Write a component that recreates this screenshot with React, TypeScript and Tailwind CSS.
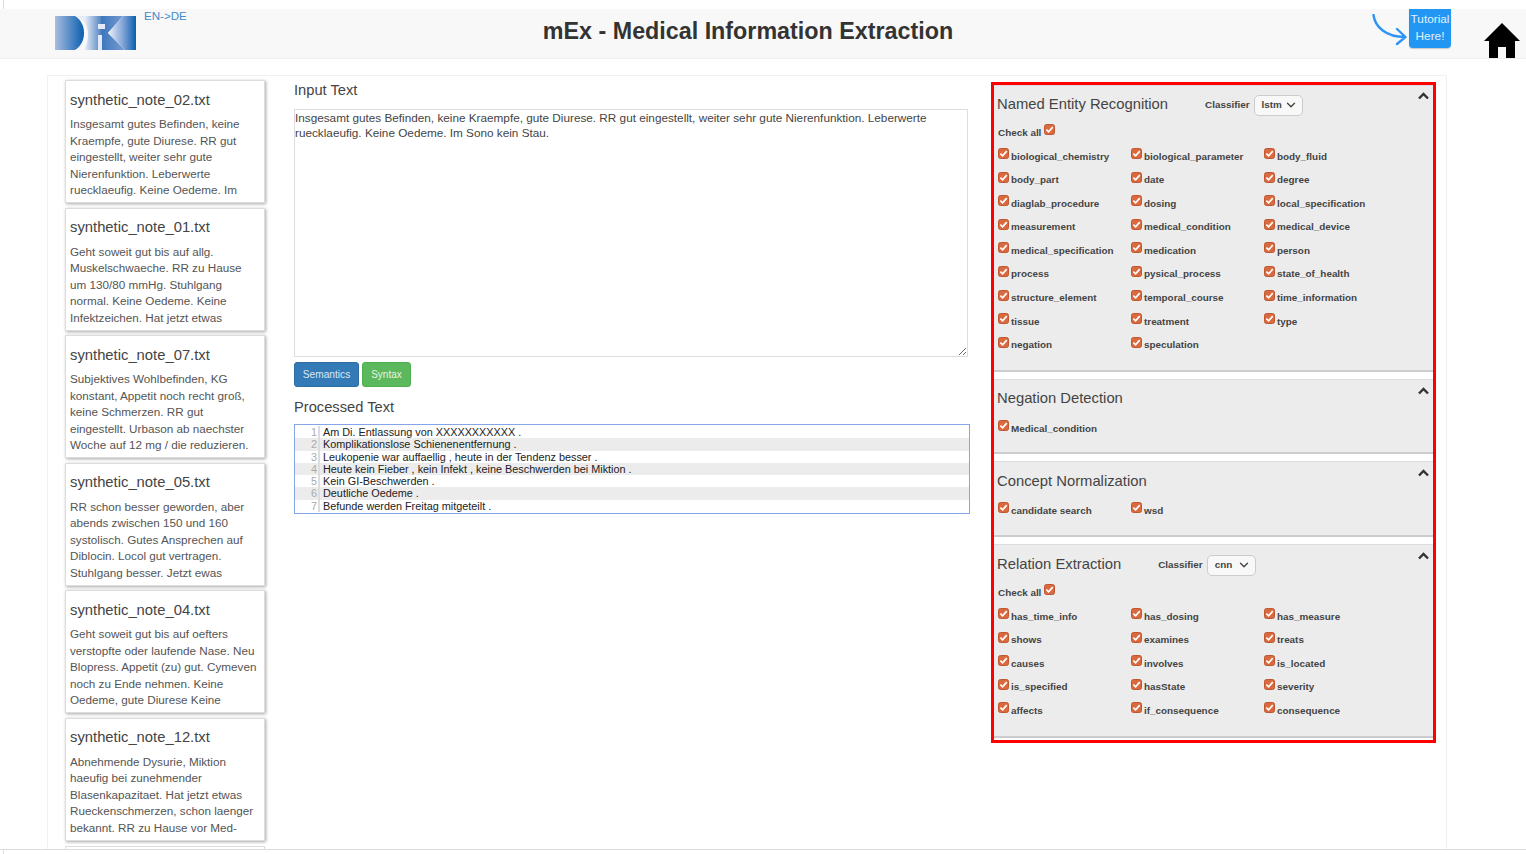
import { ChevronDown } from "lucide-react";

const NOTES = [
  { name: "synthetic_note_02.txt", lines: ["Insgesamt gutes Befinden, keine", "Kraempfe, gute Diurese. RR gut", "eingestellt, weiter sehr gute", "Nierenfunktion. Leberwerte", "ruecklaeufig. Keine Oedeme. Im"] },
  { name: "synthetic_note_01.txt", lines: ["Geht soweit gut bis auf allg.", "Muskelschwaeche. RR zu Hause", "um 130/80 mmHg. Stuhlgang", "normal. Keine Oedeme. Keine", "Infektzeichen. Hat jetzt etwas"] },
  { name: "synthetic_note_07.txt", lines: ["Subjektives Wohlbefinden, KG", "konstant, Appetit noch recht groß,", "keine Schmerzen. RR gut", "eingestellt. Urbason ab naechster", "Woche auf 12 mg / die reduzieren."] },
  { name: "synthetic_note_05.txt", lines: ["RR schon besser geworden, aber", "abends zwischen 150 und 160", "systolisch. Gutes Ansprechen auf", "Diblocin. Locol gut vertragen.", "Stuhlgang besser. Jetzt ewas"] },
  { name: "synthetic_note_04.txt", lines: ["Geht soweit gut bis auf oefters", "verstopfte oder laufende Nase. Neu", "Blopress. Appetit (zu) gut. Cymeven", "noch zu Ende nehmen. Keine", "Oedeme, gute Diurese Keine"] },
  { name: "synthetic_note_12.txt", lines: ["Abnehmende Dysurie, Miktion", "haeufig bei zunehmender", "Blasenkapazitaet. Hat jetzt etwas", "Rueckenschmerzen, schon laenger", "bekannt. RR zu Hause vor Med-"] },
];

const PROCESSED = [
  "Am Di. Entlassung von XXXXXXXXXXX .",
  "Komplikationslose Schienenentfernung .",
  "Leukopenie war auffaellig , heute in der Tendenz besser .",
  "Heute kein Fieber , kein Infekt , keine Beschwerden bei Miktion .",
  "Kein GI-Beschwerden .",
  "Deutliche Oedeme .",
  "Befunde werden Freitag mitgeteilt .",
];

const NER = [
  "biological_chemistry", "biological_parameter", "body_fluid",
  "body_part", "date", "degree",
  "diaglab_procedure", "dosing", "local_specification",
  "measurement", "medical_condition", "medical_device",
  "medical_specification", "medication", "person",
  "process", "pysical_process", "state_of_health",
  "structure_element", "temporal_course", "time_information",
  "tissue", "treatment", "type",
  "negation", "speculation",
];

const RELATIONS = [
  "has_time_info", "has_dosing", "has_measure",
  "shows", "examines", "treats",
  "causes", "involves", "is_located",
  "is_specified", "hasState", "severity",
  "affects", "if_consequence", "consequence",
];

function Check() {
  return (
    <span className="flex h-[11px] w-[11px] shrink-0 items-center justify-center rounded-[2.5px] border border-[#c2572f] bg-[#d9693f]">
      <svg width="9" height="9" viewBox="0 0 10 10" fill="none">
        <path d="M1.5 5.2 L4 7.6 L8.6 2.4" stroke="#fff" strokeWidth="1.9" />
      </svg>
    </span>
  );
}

function CheckItem({ label }: { label: string }) {
  return (
    <div className="flex h-[23.6px] w-[133px] items-start">
      <Check />
      <span className="ml-[2px] mt-[1.5px] whitespace-nowrap text-[9.9px] font-bold leading-[14px] text-[#444]">{label}</span>
    </div>
  );
}

function CheckAll() {
  return (
    <div className="mb-[9px] flex h-[15px] items-start">
      <span className="mt-[2px] text-[9.9px] font-bold leading-[14px] text-[#444]">Check all</span>
      <span className="ml-[3px]"><Check /></span>
    </div>
  );
}

function Classifier({ value }: { value: string }) {
  return (
    <div className="mt-[2px] flex items-center">
      <span className="text-[9.9px] font-bold text-[#444]">Classifier</span>
      <div className="ml-[4px] flex h-[21px] w-[49px] items-center justify-between rounded-[5px] border border-[#ccc] bg-[#f8f8f8] pl-[7px] pr-[4px] text-[9.9px] font-bold text-[#444]">
        {value}
        <ChevronDown size={14} strokeWidth={2.4} />
      </div>
    </div>
  );
}

function Panel({ title, classifier, head, caret, height, children }: { title: string; classifier?: string; head: string; caret: string; height: string; children: React.ReactNode }) {
  return (
    <div className={`relative border-b-2 border-t border-b-[#ccc] border-t-[#ddd] bg-[#ececec] pl-[4px] pr-[4px] ${height}`}>
      <div className={`-ml-[1px] flex items-center ${head}`}>
        <h3 className="text-[14.8px] font-normal leading-[24px] text-[#444]">{title}</h3>
        {classifier && <Classifier value={classifier} />}
      </div>
      <svg className={`absolute right-[4px] ${caret}`} width="11" height="8" viewBox="0 0 11 8" fill="none">
        <path d="M1 6.5 L5.5 2 L10 6.5" stroke="#333" strokeWidth="2.4" />
      </svg>
      {children}
    </div>
  );
}

export default function App() {
  return (
    <div className="relative h-screen overflow-hidden bg-white font-['Liberation_Sans',sans-serif] text-[#333]">
      <div className="flex h-[9px] pl-[3px]">
        <div className="w-px bg-[#ddd]" />
      </div>

      {/* Navbar */}
      <nav className="relative flex h-[50px] items-center justify-center border-b border-[#eee] bg-[#f8f8f8] pr-[30px]">
        <svg className="absolute left-[55px] top-[7px]" width="81" height="34" viewBox="0 0 81 34">
          <defs>
            <linearGradient id="dg" x1="0" x2="1" y1="0" y2="0">
              <stop offset="0" stopColor="#a9bde2" />
              <stop offset="1" stopColor="#0a5eae" />
            </linearGradient>
            <linearGradient id="fg" gradientUnits="userSpaceOnUse" x1="30" x2="50" y1="0" y2="0">
              <stop offset="0" stopColor="#e6ecf7" />
              <stop offset="1" stopColor="#2f6cb6" />
            </linearGradient>
            <linearGradient id="kw" gradientUnits="userSpaceOnUse" x1="47" x2="72" y1="0" y2="0">
              <stop offset="0" stopColor="#3f78bd" />
              <stop offset="1" stopColor="#7fa0d4" />
            </linearGradient>
            <linearGradient id="kg" gradientUnits="userSpaceOnUse" x1="53" x2="81" y1="0" y2="0">
              <stop offset="0" stopColor="#eef2fa" />
              <stop offset="0.55" stopColor="#7ea2d5" />
              <stop offset="1" stopColor="#0a5eae" />
            </linearGradient>
          </defs>
          <path d="M0 0 H20 C26 4 29 10 29 17 C29 24 26 30 20 34 H0 Z" fill="url(#dg)" />
          <path d="M22 0 H48 V34 H29 C32 29 33 23 33 17 C33 10 28 3 22 0 Z" fill="url(#fg)" />
          <path d="M46 0 H68 L53 17 L70 34 H46 Z" fill="url(#kw)" />
          <path d="M43 8 H50 V13 H43 Z M43 19 H47 V34 H43 Z" fill="#e3e9f6" />
          <path d="M53 17 L68 0 H81 V34 H70 Z" fill="url(#kg)" />
        </svg>
        <a className="absolute left-[144px] top-0 text-[11.6px] leading-[14px] text-[#428bca]">EN-&gt;DE</a>
        <h1 className="mb-[5px] text-[23.3px] font-bold leading-[26px] text-[#333]">mEx - Medical Information Extraction</h1>
        <svg className="absolute left-[1372px] top-[5px]" width="36" height="32" viewBox="0 0 36 32" fill="none">
          <path d="M1.5 1 C3 13 14 23 33 23 M25 15 L33.5 23 L25 30" stroke="#2f95f5" strokeWidth="2.4" strokeLinecap="round" strokeLinejoin="round" />
        </svg>
        <div className="absolute left-[1409px] top-0 flex h-[39px] w-[42px] items-center justify-center rounded-b-[4px] bg-[#2196f3] pb-[2px] text-center text-[11.8px] leading-[16.5px] text-[#e3f1fd] shadow-[0_1px_1px_rgba(0,0,0,0.2)]">
          Tutorial<br />Here!
        </div>
        <svg className="absolute left-[1484px] top-[14px]" width="36" height="35" viewBox="0 0 36 35">
          <path d="M18 0 L36 18 H31 V35 H22 V24 H14 V35 H5 V18 H0 Z" fill="#000" />
        </svg>
      </nav>

      {/* Main content */}
      <div className="ml-[47px] mt-[16px] flex h-[800px] w-[1400px] border-x border-t border-[#f0f0f0]">
        <div className="ml-[17px] mt-[4px] w-[200px] shrink-0">
          {NOTES.map((n) => (
            <div key={n.name} className="mb-[4.6px] h-[123px] border border-[#ddd] bg-white pl-[4px] pt-[8.5px] shadow-[1px_1px_3px_rgba(0,0,0,0.35)]">
              <h4 className="mb-[6.5px] text-[14.8px] font-normal leading-[20px] text-[#444]">{n.name}</h4>
              <p className="whitespace-nowrap text-[11.7px] leading-[16.5px] text-[#555]">
                {n.lines.map((l) => <span key={l} className="block">{l}</span>)}
              </p>
            </div>
          ))}
          <div className="h-[20px] border border-[#ddd] bg-white" />
        </div>

        <div className="ml-[29px] mt-[4px] w-[676px] shrink-0">
          <h3 className="text-[14.7px] font-normal leading-[20px] text-[#444]">Input Text</h3>
          <textarea
            className="mt-[9px] block h-[248px] w-[674px] resize border border-[#ddd] pl-0 text-[11.76px] leading-[15px] text-[#444] outline-none"
            defaultValue="Insgesamt gutes Befinden, keine Kraempfe, gute Diurese. RR gut eingestellt, weiter sehr gute Nierenfunktion. Leberwerte ruecklaeufig. Keine Oedeme. Im Sono kein Stau."
          />
          <div className="mt-[5px] flex gap-[3px]">
            <button className="h-[25px] w-[65px] rounded-[3px] border border-[#2e6da4] bg-[#337ab7] text-[10.2px] text-[#dbe8f3]">Semantics</button>
            <button className="h-[25px] w-[49px] rounded-[3px] border border-[#4cae4c] bg-[#5cb85c] text-[10px] text-[#e6f5e6]">Syntax</button>
          </div>
          <h3 className="mt-[10px] text-[14.7px] font-normal leading-[20px] text-[#444]">Processed Text</h3>
          <div className="mt-[7px] w-[676px] border border-[#84a5e8] py-[1px]">
            {PROCESSED.map((line, i) => (
              <div key={line} className={`flex h-[12.3px] text-[10.85px] leading-[12.3px] text-[#222] ${i % 2 === 1 ? "bg-[#ececec]" : ""}`}>
                <span className="w-[25px] shrink-0 border-r-2 border-[#ddd] pr-[1px] text-right text-[#aaa]">{i + 1}</span>
                <span className="ml-[3px] whitespace-nowrap">{line}</span>
              </div>
            ))}
          </div>
        </div>

        {/* Options */}
        <div className="ml-[21px] mt-[6px] h-[661px] w-[445px] shrink-0 border-[3px] border-[#f00]">
          <Panel title="Named Entity Recognition" classifier="lstm" head="gap-[37px] pt-[6px]" caret="top-[6px]" height="h-[287px]">
            <div className="mt-[8px]"><CheckAll /></div>
            <div className="flex flex-wrap">
              {NER.map((l) => <CheckItem key={l} label={l} />)}
            </div>
          </Panel>
          <div className="h-[7px]" />
          <Panel title="Negation Detection" head="pt-[6px]" caret="top-[7px]" height="h-[75px]">
            <div className="mt-[10px]"><CheckItem label="Medical_condition" /></div>
          </Panel>
          <div className="h-[7px]" />
          <Panel title="Concept Normalization" head="pt-[7px]" caret="top-[7px]" height="h-[76px]">
            <div className="mt-[9px] flex">
              <CheckItem label="candidate search" />
              <CheckItem label="wsd" />
            </div>
          </Panel>
          <div className="h-[7px]" />
          <Panel title="Relation Extraction" classifier="cnn" head="gap-[37px] pt-[7px]" caret="top-[7px]" height="h-[194px]">
            <div className="mt-[8px]"><CheckAll /></div>
            <div className="flex flex-wrap">
              {RELATIONS.map((l) => <CheckItem key={l} label={l} />)}
            </div>
          </Panel>
        </div>
      </div>

      {/* Footer strip */}
      <div className="fixed bottom-0 left-0 right-0 h-[5px] border-t border-[#ddd] bg-white pl-[3px]">
        <div className="h-full w-px bg-[#ddd]" />
      </div>
    </div>
  );
}
